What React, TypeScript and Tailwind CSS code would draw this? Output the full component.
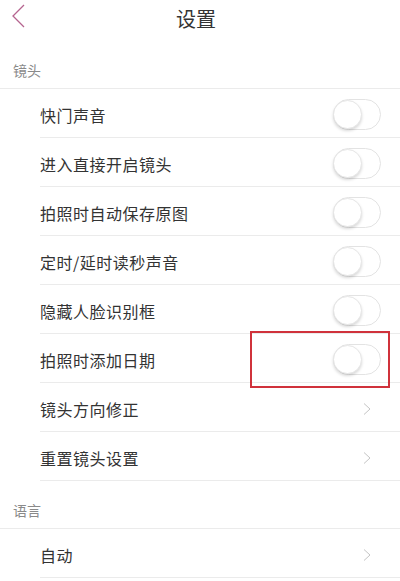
import React from "react";

const font = { fontFamily: '"Noto Sans CJK SC", "Noto Sans", sans-serif' };

function Toggle() {
  return (
    <div className="relative w-[48px] h-[31px] rounded-full border border-[#e3e3e3] bg-white">
      <div className="absolute left-[-1px] top-[0px] w-[29px] h-[29px] rounded-full bg-white border border-[#e6e6e6] shadow-[0_2px_3px_rgba(0,0,0,0.15)]" />
    </div>
  );
}

function Chevron() {
  return (
    <svg width="8" height="12" viewBox="0 0 8 12" className="mr-[10px]">
      <path d="M1 0.5 L7 6 L1 11.5" fill="none" stroke="#c4c4c4" strokeWidth="1" />
    </svg>
  );
}

function Row({ label, kind }: { label: string; kind: "toggle" | "arrow" }) {
  return (
    <div className="ml-[40px] h-[49px] border-b border-[#ebebeb] flex items-center justify-between pt-[3px] pr-[19px]">
      <span className="text-[16px] leading-[20px] text-[#333] tracking-[0.5px]">{label}</span>
      {kind === "toggle" ? <Toggle /> : <Chevron />}
    </div>
  );
}

function Label({ text }: { text: string }) {
  return (
    <div className="h-[48px] flex items-end pb-[8px] pl-[13px] border-b border-[#ebebeb]">
      <span className="text-[14px] leading-[20px] text-[#8a8a8a]">{text}</span>
    </div>
  );
}

export default function App() {
  return (
    <div className="relative w-[400px] h-[581px] bg-white overflow-hidden" style={font}>
      <div className="relative h-[41px] flex items-center justify-center pb-[3px] pr-[8px]">
        <svg width="14" height="24" viewBox="0 0 14 24" className="absolute left-[11px] top-[4px]">
          <path d="M13 1 L2 12 L13 23" fill="none" stroke="#b5648f" strokeWidth="1.3" />
        </svg>
        <span className="text-[20px] leading-[24px] text-[#333]">设置</span>
      </div>
      <Label text="镜头" />
      <Row label="快门声音" kind="toggle" />
      <Row label="进入直接开启镜头" kind="toggle" />
      <Row label="拍照时自动保存原图" kind="toggle" />
      <Row label="定时/延时读秒声音" kind="toggle" />
      <Row label="隐藏人脸识别框" kind="toggle" />
      <Row label="拍照时添加日期" kind="toggle" />
      <Row label="镜头方向修正" kind="arrow" />
      <Row label="重置镜头设置" kind="arrow" />
      <Label text="语言" />
      <Row label="自动" kind="arrow" />
      <div className="absolute left-[250px] top-[331px] w-[140px] h-[57px] border-2 border-[#d0323b]" />
    </div>
  );
}
